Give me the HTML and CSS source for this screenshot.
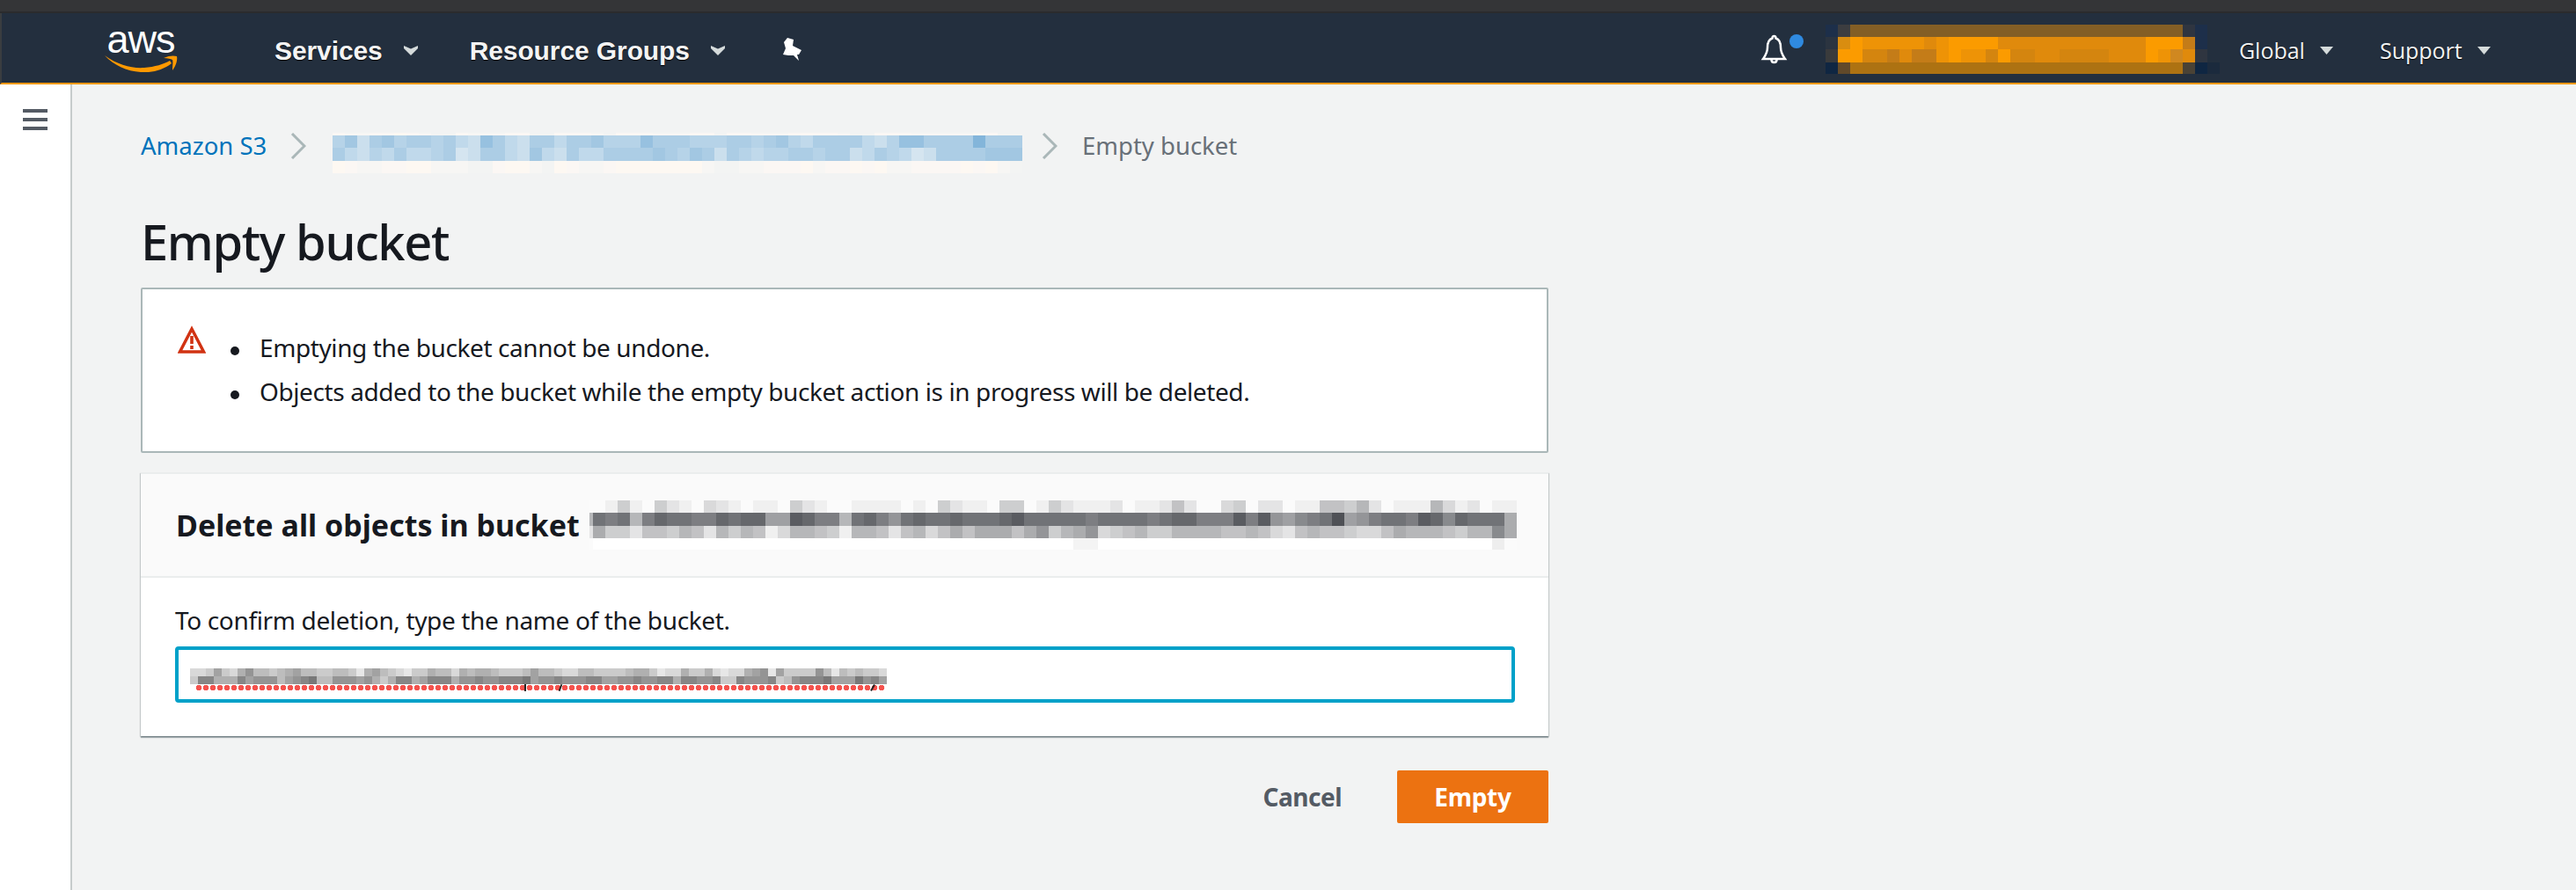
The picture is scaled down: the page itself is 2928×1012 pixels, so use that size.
FILE: index.html
```html
<!DOCTYPE html>
<html lang="en">
<head>
<meta charset="utf-8">
<title>Empty bucket</title>
<link rel="stylesheet" href="styles.css">
</head>
<body>
<div class="os-strip"></div>
<header class="nav">
  <a class="logo">
    <span class="logo-word">aws</span>
    <svg class="logo-smile" viewBox="0 0 84 20"><path d="M1 1C16 12 32 16 46 15C58 14 68 11 75 7L77 10C67 18 54 21 42 20C26 19 11 12 1 1Z"/><path d="M68 4C74 1 80 1 83 2C84 6 82 13 78 18C78 13 79 8 78 6C76 5 73 4 68 4Z"/></svg>
  </a>
  <a class="nav-main nav-services">Services</a>
  <svg class="caret" viewBox="0 0 18 11"><path d="M1 0L9 3.500L17 0L17 3L9 11L1 3Z"/></svg>
  <a class="nav-main nav-groups">Resource Groups</a>
  <svg class="caret" viewBox="0 0 18 11"><path d="M1 0L9 3.500L17 0L17 3L9 11L1 3Z"/></svg>
  <svg class="pin" viewBox="0 0 26 28"><path d="M8 1L15 3L14 10L24 15L21 20L19 20L21 27L15 21L9 21L3 20L6 13L4 6Z"/></svg>
  <svg class="bell" viewBox="0 0 31 34"><path d="M15.500 2C14 2 13.500 3 13.500 4.500C9 6 8 10 8 15C8 21 5 25 3 28L28 28C26 25 23 21 23 15C23 10 22 6 17.500 4.500C17.500 3 17 2 15.500 2Z"/><path d="M12.500 29C12.500 33 18.500 33 18.500 29"/></svg>
  <span class="bell-dot"></span>
  <svg class="mosaic mosaic-account" data-mosaic="account"></svg>
  <a class="nav-small nav-global">Global</a>
  <svg class="caret caret-small" viewBox="0 0 15 9"><path d="M0 0H15L7.500 9Z"/></svg>
  <a class="nav-small nav-support">Support</a>
  <svg class="caret caret-small" viewBox="0 0 15 9"><path d="M0 0H15L7.500 9Z"/></svg>
</header>
<div class="shell">
  <aside class="sidebar">
    <div class="burger"><span></span><span></span><span></span></div>
  </aside>
  <main class="content">
    <nav class="crumbs">
      <a class="crumb-link">Amazon S3</a>
      <svg class="crumb-sep crumb-sep-first" viewBox="0 0 18 30"><path d="M2 1L16 15L2 29"/></svg>
      <svg class="mosaic mosaic-crumb" data-mosaic="crumb"></svg>
      <svg class="crumb-sep crumb-sep-last" viewBox="0 0 18 30"><path d="M2 1L16 15L2 29"/></svg>
      <span class="crumb-current">Empty bucket</span>
    </nav>
    <h1 class="title">Empty bucket</h1>
    <section class="alert">
      <svg class="alert-icon" viewBox="0 0 32 32"><path class="alert-tri" d="M16 4L29.500 30H2.500Z"/><rect class="alert-mark" x="14.200" y="12" width="3.600" height="9"/><rect class="alert-mark" x="14.200" y="23" width="3.600" height="4"/></svg>
      <ul class="alert-list">
        <li>Emptying the bucket cannot be undone.</li>
        <li>Objects added to the bucket while the empty bucket action is in progress will be deleted.</li>
      </ul>
    </section>
    <section class="card">
      <div class="card-head">
        <h2 class="card-title">Delete all objects in bucket</h2>
        <svg class="mosaic mosaic-head" data-mosaic="head"></svg>
      </div>
      <div class="card-body">
        <label class="field-label">To confirm deletion, type the name of the bucket.</label>
        <div class="field" role="textbox">
          <svg class="mosaic mosaic-field" data-mosaic="field"></svg>
          <div class="spell">
            <span class="tick tick-a"></span>
            <span class="tick tick-b"></span>
            <span class="tick tick-c"></span>
          </div>
        </div>
      </div>
    </section>
    <div class="actions">
      <button class="btn btn-link">Cancel</button>
      <button class="btn btn-primary">Empty</button>
    </div>
  </main>
</div>
<script src="mosaic.js"></script>
</body>
</html>
```
FILE: styles.css
```css
* { box-sizing: border-box; }
html, body { margin: 0; height: 100%; }
body {
  display: flex;
  flex-direction: column;
  height: 1012px;
  overflow: hidden;
  background: #f2f3f3;
  color: #16191f;
  font-family: "Noto Sans", "Open Sans", sans-serif;
  font-size: 28px;
}
.os-strip {
  height: 15px;
  flex: none;
  background: #343537;
  border-bottom: 2px solid #2a2b2d;
}
.nav {
  flex: none;
  display: flex;
  align-items: center;
  height: 81px;
  padding-top: 2px;
  background: #232f3e;
  border-left: 2px solid #3a3d40;
  border-bottom: 2px solid #ff9900;
  color: #fff;
}
.logo {
  display: flex;
  flex-direction: column;
  align-items: center;
  width: 84px;
  margin-left: 116px;
}
.logo-word {
  font-family: "Liberation Sans", sans-serif;
  font-size: 45px;
  line-height: 30px;
  height: 32px;
  letter-spacing: -1px;
}
.logo-smile { width: 84px; height: 20px; fill: #ff9900; }
.nav-main {
  margin-top: 4px;
  font-family: "Liberation Sans", sans-serif;
  font-weight: 700;
  font-size: 30px;
  letter-spacing: -0.1px;
  text-shadow: 0 1px 1px #000;
  color: #f4f4f4;
}
.nav-services { margin-left: 110px; }
.nav-groups { margin-left: 58px; }
.caret { width: 18px; height: 11px; margin-left: 23px; margin-top: 4px; fill: #d5dbdb; }
.pin { width: 26px; height: 28px; margin-left: 62px; fill: #fff; }
.bell {
  width: 31px;
  height: 34px;
  margin-left: 1088px;
  fill: none;
  stroke: #fff;
  stroke-width: 2.500;
}
.bell-dot {
  width: 16px;
  height: 16px;
  margin: -18px 0 0 2px;
  border-radius: 50%;
  background: #2f8ae0;
}
.mosaic { display: block; flex: none; shape-rendering: crispEdges; }
.mosaic-account { margin-left: 25px; }
.nav-small {
  margin-top: 2px;
  font-family: "Open Sans", sans-serif;
  font-size: 25px;
  color: #f2f3f3;
  text-shadow: 0 1px 1px #000;
}
.nav-global { margin-left: 22px; }
.nav-support { margin-left: 53px; }
.caret-small { width: 15px; height: 9px; margin-left: 17px; fill: #d5dbdb; }

.shell { flex: 1; display: flex; min-height: 0; }
.sidebar {
  width: 82px;
  flex: none;
  background: #fff;
  border-right: 2px solid #c6cccc;
  padding: 28px 0 0 26px;
}
.burger { display: flex; flex-direction: column; gap: 6px; width: 28px; }
.burger span { height: 4px; background: #545b64; }
.content { width: 1678px; flex: none; padding: 55px 0 0 78px; }
.crumbs { display: flex; align-items: flex-start; height: 46px; }
.crumb-link { color: #0073bb; font-size: 27.500px; line-height: 30px; width: 170px; }
.crumb-sep {
  width: 18px;
  height: 30px;
  fill: none;
  stroke: #aab7b8;
  stroke-width: 3;
}
.crumb-sep-first { margin-right: 30px; }
.crumb-sep-last { margin-left: 22px; }
.crumb-current { color: #687078; font-size: 27.500px; line-height: 30px; margin-left: 28px; }
.title {
  margin: 41px 0 0;
  font-size: 56px;
  font-weight: 500;
  line-height: 72px;
  letter-spacing: -1.400px;
}
.alert {
  display: flex;
  align-items: flex-start;
  height: 188px;
  margin-top: 17px;
  padding: 41px 40px 0;
  background: #fff;
  border: 2px solid #aab7b8;
  border-radius: 2px;
}
.alert-icon { width: 32px; height: 32px; flex: none; }
.alert-tri { fill: none; stroke: #d13212; stroke-width: 3.500; }
.alert-mark { fill: #d13212; }
.alert-list {
  margin: 0;
  padding: 0 0 0 61px;
  line-height: 50px;
  list-style: none;
  letter-spacing: -0.4px;
}
.alert-list li::before {
  content: "";
  display: inline-block;
  width: 10px;
  height: 10px;
  margin: 0 23px 2px -33px;
  border-radius: 50%;
  background: #16191f;
}
.card {
  height: 300px;
  margin-top: 22px;
  background: #fff;
  border-top: 2px solid #eaeded;
  box-shadow: 0 2px 1px 0 rgba(0, 28, 36, 0.3), 1px 1px 1px 0 rgba(0, 28, 36, 0.15), -1px 1px 1px 0 rgba(0, 28, 36, 0.15);
}
.card-head {
  display: flex;
  align-items: center;
  height: 118px;
  padding: 0 0 0 40px;
  background: #fafafa;
  border-bottom: 2px solid #eaeded;
}
.card-title {
  flex: none;
  margin: 0 11px 0 0;
  font-size: 34px;
  font-weight: 700;
  line-height: 44px;
  white-space: nowrap;
}
.card-body { padding: 32px 38px 0 39px; }
.field-label { display: block; line-height: 32px; height: 46px; letter-spacing: -0.35px; }
.field {
  position: relative;
  height: 64px;
  padding: 21px 0 0 13px;
  background: #fff;
  border: 4px solid #00a1c9;
  border-radius: 4px;
}
.spell {
  position: relative;
  width: 784px;
  height: 6px;
  margin: 1px 0 0 6px;
  background-image: radial-gradient(circle at 4px 3px, #f4524d 3px, transparent 3.600px);
  background-size: 8px 6px;
}
.tick { position: absolute; top: -1px; width: 2px; height: 8px; background: #222; }
.tick-a { left: 374px; }
.tick-b { left: 414px; transform: rotate(20deg); }
.tick-c { left: 769px; transform: rotate(30deg); }
.actions {
  display: flex;
  justify-content: flex-end;
  align-items: center;
  margin-top: 39px;
  width: 1600px;
}
.btn {
  height: 60px;
  font-family: inherit;
  font-size: 28px;
  font-weight: 700;
  border: 0;
  border-radius: 2px;
  cursor: pointer;
}
.btn-link { background: none; color: #545b64; padding: 0; margin-right: 63px; letter-spacing: -0.5px; }
.btn-primary { width: 172px; background: #ec7211; color: #fff; letter-spacing: -0.3px; }
```
FILE: mosaic.js
```js
function hex(n) { return Math.round(n).toString(16).padStart(2, "0"); }
function ramp(from, to, steps) {
  var a = [1, 3, 5].map(function (i) { return parseInt(from.substr(i, 2), 16); });
  var b = [1, 3, 5].map(function (i) { return parseInt(to.substr(i, 2), 16); });
  var out = [];
  for (var s = 0; s < steps; s++) {
    var t = s / (steps - 1);
    out.push("#" + a.map(function (v, i) { return hex(v + (b[i] - v) * t); }).join(""));
  }
  return out;
}
function repeat(value, count) {
  var out = [];
  for (var i = 0; i < count; i++) out.push(value);
  return out;
}
function pad(str, count, ch) { return str + ch.repeat(Math.max(0, count - str.length)); }

var MOSAICS = {
  account: {
    cols: repeat(14, 32),
    rows: [14, 14, 15, 13],
    palette: ["#1d2f4a", "#3c3d40", "#835e25", "#2f3540", "#232f3e", "#2b3440", "#d98d10", "#fb9b00", "#ee9306", "#e08a0c", "#d4850f", "#c47c18", "#3a3b3c", "#0f2642", "#61492a", "#ad7212", "#4a4235", "#d08820", "#1b2a3d"],
    data: [
      "01" + "2".repeat(27) + "304",
      "56788888987777999999999999777b04",
      "c77aab9bb87" + "88a7aa99aaaa999" + "78h934",
      "de" + "f".repeat(27) + "gdi"
    ]
  },
  crumb: {
    cols: repeat(14, 56),
    rows: [3, 14, 15, 14],
    palette: ramp("#dfebf3", "#83b5da", 10).concat(["#f3f4f3", "#f7f6f4", "#fbf7f4", "#fdf8f2"]),
    data: [
      "cbbccdcbaacbbbccaacccbacccbbbccaccbbbccccbaacccbbbbbccaa",
      "46256455453275325535564447555444554564355553247755559555",
      "53243533451255326325335555654652543445545523543125555666",
      "dcbbccddbbbaacddbadcbbcdddddddbaabbcccdbccdcdbbccccdcdba"
    ]
  },
  head: {
    cols: [4].concat(repeat(14, 75)),
    rows: [14, 15, 14, 13],
    palette: ramp("#fbfbfb", "#4f5156", 16).concat(["#ffffff", "#f4f4f4", "#eeeeee"]),
    data: [
      "0" + "0141042103210110421001111010421104401" + "42111201125200340220115546201116312011",
      "6" + "cbc6bdccbbdcdd88edbb6cdb9cdccdcccdecc" + "cccbccccbcddbbbebe98abcf89bccbedadccc7",
      "2" + "7442554652646513665416652563575777579" + "46793456446666556532565543357666546 6a7".replace(" ", ""),
      "0" + "g".repeat(39) + "hh" + "g".repeat(32) + "i" + "0"
    ]
  },
  field: {
    cols: repeat(9, 88),
    rows: [9, 9],
    palette: ramp("#f5f5f5", "#787878", 10),
    data: [
      "2236325744345644334431564321335442545543334644" + "322443333455312253352122567163333741434332",
      "3885558677746789447776753588568885778778889677" + "877788667787788588778338777834788896669786"
    ]
  }
};

document.querySelectorAll("svg[data-mosaic]").forEach(function (svg) {
  var m = MOSAICS[svg.getAttribute("data-mosaic")];
  var width = m.cols.reduce(function (a, b) { return a + b; }, 0);
  var height = m.rows.reduce(function (a, b) { return a + b; }, 0);
  svg.setAttribute("width", width);
  svg.setAttribute("height", height);
  svg.setAttribute("viewBox", "0 0 " + width + " " + height);
  var y = 0;
  m.rows.forEach(function (h, r) {
    var x = 0;
    var line = pad(m.data[r], m.cols.length, "0");
    m.cols.forEach(function (w, c) {
      var rect = document.createElementNS("http://www.w3.org/2000/svg", "rect");
      rect.setAttribute("x", x);
      rect.setAttribute("y", y);
      rect.setAttribute("width", w);
      rect.setAttribute("height", h);
      rect.setAttribute("fill", m.palette[parseInt(line[c], 36)]);
      svg.appendChild(rect);
      x += w;
    });
    y += h;
  });
});
```
